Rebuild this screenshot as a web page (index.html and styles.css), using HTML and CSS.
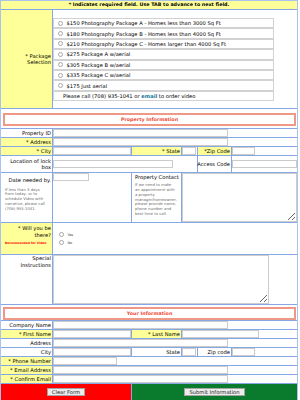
FILE: index.html
```html
<!DOCTYPE html>
<html lang="en">
<head>
    <meta charset="UTF-8">
    <meta name="viewport" content="width=device-width, initial-scale=1.0">
    <title>Photo Order Form</title>
    <link rel="stylesheet" href="styles.css">
</head>
<body>
<form class="order-form">
    <div class="cell notice span-6">* Indicates required field. Use TAB to advance to next field.</div>

    <!-- package choice -->
    <div class="cell label req pkg-label">* Package Selection</div>
    <div class="cell span-5 pkg-cell">
        <div class="options">
            <label class="option"><input type="radio" name="package">$150 Photography Package A - Homes less than 3000 Sq Ft</label>
            <label class="option"><input type="radio" name="package">$180 Photography Package B - Homes less than 4000 Sq Ft</label>
            <label class="option"><input type="radio" name="package">$210 Photography Package C - Homes larger than 4000 Sq Ft</label>
            <label class="option"><input type="radio" name="package">$275 Package A w/aerial</label>
            <label class="option"><input type="radio" name="package">$305 Package B w/aerial</label>
            <label class="option"><input type="radio" name="package">$335 Package C w/aerial</label>
            <label class="option"><input type="radio" name="package">$175 Just aerial</label>
            <div class="option video"><span>Please call (708) 935-1041 or <a href="#">email</a> to order video</span></div>
        </div>
    </div>

    <!-- property -->
    <div class="cell span-6 section-cell"><div class="section-title">Property Information</div></div>

    <div class="cell label">Property ID</div>
    <div class="cell span-5"><input class="field w-long" type="text"></div>

    <div class="cell label req">* Address</div>
    <div class="cell span-5"><input class="field w-long" type="text"></div>

    <div class="cell label req">* City</div>
    <div class="cell"><input class="field" type="text"></div>
    <div class="cell label req">* State</div>
    <div class="cell"><input class="field w-state" type="text"></div>
    <div class="cell label req">*Zip Code</div>
    <div class="cell"><input class="field w-zip" type="text"></div>

    <div class="cell label two-line">Location of lock box</div>
    <div class="cell span-3 middle"><input class="field w-lockbox" type="text"></div>
    <div class="cell label middle">Access Code</div>
    <div class="cell middle"><input class="field" type="text"></div>

    <div class="cell date-cell">
        <div class="sub-label">Date needed by.</div>
        <p class="note">If less than 3 days<br>from today, or to<br>schedule Video with<br>narrative, please call<br>(708) 935-1041.</p>
    </div>
    <div class="cell"><input class="field w-date" type="text"></div>
    <div class="cell contact-cell">
        <div class="contact-label">Property Contact</div>
        <p class="note">If we need to make<br>an appointment with<br>a property<br>manager/homeowner,<br>please provide name,<br>phone number and<br>best time to call.</p>
    </div>
    <div class="cell span-3"><textarea class="box contact-box"></textarea></div>

    <div class="cell req attend-cell">
        <div class="sub-label">* Will you be there?</div>
        <div class="hint">Recommended for Video</div>
    </div>
    <div class="cell span-5 choice-cell">
        <label class="choice"><input type="radio" name="attend">Yes</label>
        <label class="choice"><input type="radio" name="attend">No</label>
    </div>

    <div class="cell label top">Special Instructions</div>
    <div class="cell span-5"><textarea class="box special-box"></textarea></div>

    <!-- customer -->
    <div class="cell span-6 section-cell yours"><div class="section-title">Your Information</div></div>

    <div class="cell label">Company Name</div>
    <div class="cell span-5"><input class="field w-long" type="text"></div>

    <div class="cell label req">* First Name</div>
    <div class="cell"><input class="field" type="text"></div>
    <div class="cell label req">* Last Name</div>
    <div class="cell span-3"><input class="field w-last" type="text"></div>

    <div class="cell label">Address</div>
    <div class="cell span-5"><input class="field w-long" type="text"></div>

    <div class="cell label">City</div>
    <div class="cell"><input class="field" type="text"></div>
    <div class="cell label">State</div>
    <div class="cell"><input class="field w-state" type="text"></div>
    <div class="cell label">Zip code</div>
    <div class="cell"><input class="field w-zip" type="text"></div>

    <div class="cell label req">* Phone Number</div>
    <div class="cell span-5"><input class="field w-phone" type="text"></div>

    <div class="cell label req">* Email Address</div>
    <div class="cell span-5"><input class="field w-long" type="text"></div>

    <div class="cell label req">* Confirm Email</div>
    <div class="cell span-5"><input class="field w-long" type="text"></div>

    <div class="cell span-2 btn-cell clear-cell"><button class="btn" type="reset">Clear Form</button></div>
    <div class="cell span-4 btn-cell submit-cell"><button class="btn" type="submit">Submit Information</button></div>
</form>
</body>
</html>
```

FILE: styles.css
```css
body{
     margin: 0;
     font-family: "DejaVu Sans", Verdana, sans-serif;
     font-size: 5.2px;
     color: #000;
}
.order-form{
     display: grid;
     grid-template-columns: 51px 78px 49px 15px 33px 65px;
     grid-auto-rows: minmax(8px, auto);
     gap: 1px;
     width: max-content;
     background-color: #86a6e4;
     border: 1px solid #a9c3ee;
}
.cell{
     background-color: #fff;
     line-height: 8px;
     min-width: 0;
}
.span-2{ grid-column: span 2; }
.span-3{ grid-column: span 3; }
.span-4{ grid-column: span 4; }
.span-5{ grid-column: span 5; }
.span-6{ grid-column: span 6; }

.req{
     background-color: #ffff99;
}
.label{
     text-align: right;
     padding-right: 1px;
     white-space: nowrap;
}
.middle{
     display: flex;
     align-items: center;
}
.label.middle{
     justify-content: flex-end;
}
.top{
     white-space: normal;
     line-height: 6.5px;
}

.notice{
     background-color: #ffff99;
     text-align: center;
     font-weight: bold;
     font-size: 4.8px;
}

/* packages */
.pkg-label{
     display: flex;
     align-items: center;
     justify-content: flex-end;
     white-space: normal;
     line-height: 6.5px;
}
.pkg-cell{
     padding: 8px 0 7px 0;
}
.options{
     width: 221px;
}
.option{
     display: flex;
     align-items: center;
     height: 10.4px;
     border: 1px solid #d2d2d2;
     box-sizing: border-box;
     line-height: 8px;
}
.option input, .choice input{
     appearance: none;
     width: 5px;
     height: 5px;
     margin: 0 3.5px 0 4px;
     border: 1px solid #a6a6a6;
     border-radius: 50%;
     background: #fff;
}
.video{
     padding-left: 9px;
}
.video a{
     color: #16789a;
     font-weight: bold;
     text-decoration: none;
}

/* red section headings */
.section-cell{
     padding: 4px 1px 2px 2px;
}
.section-cell.yours{
     padding: 2px 1px 0 2px;
}
.section-title{
     height: 13px;
     box-sizing: border-box;
     border: 2px solid #f09886;
     color: #ef4a36;
     font-weight: bold;
     font-size: 4.8px;
     line-height: 9px;
     text-align: center;
}

/* inputs */
.field{
     display: block;
     width: 100%;
     height: 8px;
     box-sizing: border-box;
     margin: 0;
     padding: 0;
     border: 1px solid #cbcbcb;
     background: #fff;
     font-size: 5px;
}
.w-long{ width: 175px; }
.w-state{ width: 14px; }
.w-zip{ width: 23px; }
.w-lockbox{ width: 120px; }
.w-date{ width: 36px; }
.w-last{ width: 77px; }
.w-phone{ width: 64px; }

.two-line{
     white-space: normal;
     line-height: 6px;
     padding: 2px 1px 2px 0;
}

.box{
     display: block;
     box-sizing: border-box;
     margin: 0;
     border: 1px solid #cdcdcd;
     font-size: 5px;
}
.contact-box{
     width: 100%;
     height: 49px;
}
.special-box{
     width: 216px;
     height: 49px;
}

/* date + contact */
.date-cell{
     padding: 4px 1px 0 4px;
}
.sub-label{
     text-align: right;
     line-height: 6.5px;
}
.note{
     margin: 4px 0 0 0;
     font-size: 3.8px;
     line-height: 4.8px;
     color: #6e6e6e;
}
.contact-cell{
     padding: 1px 0 0 3px;
}
.contact-label{
     white-space: nowrap;
     line-height: 6px;
}
.contact-cell .note{
     margin-top: 3px;
}

/* attending */
.attend-cell{
     height: 31px;
     box-sizing: border-box;
     padding: 2px 1px 0 4px;
}
.attend-cell .sub-label{
     padding-left: 8px;
     line-height: 7px;
}
.hint{
     margin-top: 1.5px;
     color: #ff0000;
     font-weight: bold;
     font-size: 3px;
     line-height: 5px;
}
.choice-cell{
     display: flex;
     flex-direction: column;
     justify-content: center;
     padding-left: 2px;
}
.choice{
     display: flex;
     align-items: center;
     height: 8px;
     font-size: 3.5px;
     color: #444;
}

/* buttons */
.btn-cell{
     display: flex;
     align-items: center;
     justify-content: center;
     height: 16px;
}
.clear-cell{
     background-color: #ff0000;
}
.submit-cell{
     background-color: #0a7a2c;
}
.btn{
     height: 8px;
     padding: 0 4px;
     border: 1px solid #a4a4a4;
     background-color: #ececec;
     font-family: "DejaVu Sans", Verdana, sans-serif;
     font-size: 5.2px;
     line-height: 6px;
     color: #222;
}
```
